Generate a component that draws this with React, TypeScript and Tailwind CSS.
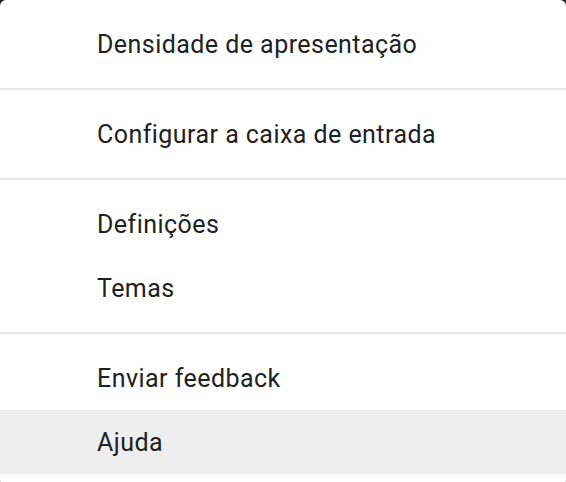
const groups: string[][] = [
  ["Densidade de apresentação"],
  ["Configurar a caixa de entrada"],
  ["Definições", "Temas"],
  ["Enviar feedback", "Ajuda"],
];

const App = () => {
  return (
    <div className="h-[482px] w-[566px] overflow-hidden bg-[#202124]">
      <div className="rounded-[6px] bg-white font-['Roboto',sans-serif] text-[25px] text-[#202124]">
        {groups.map((items, gi) => (
          <div key={gi} className={gi > 0 ? "border-t-2 border-[#e8e8e8] py-3" : "py-3"}>
            {items.map((label) => (
              <div
                key={label}
                className={
                  "flex h-16 items-center pl-[97px] pt-[2px] tracking-[0.45px] " +
                  (label === "Ajuda" ? "bg-[#eeeeee]" : "")
                }
              >
                {label}
              </div>
            ))}
          </div>
        ))}
      </div>
    </div>
  );
};

export default App;
